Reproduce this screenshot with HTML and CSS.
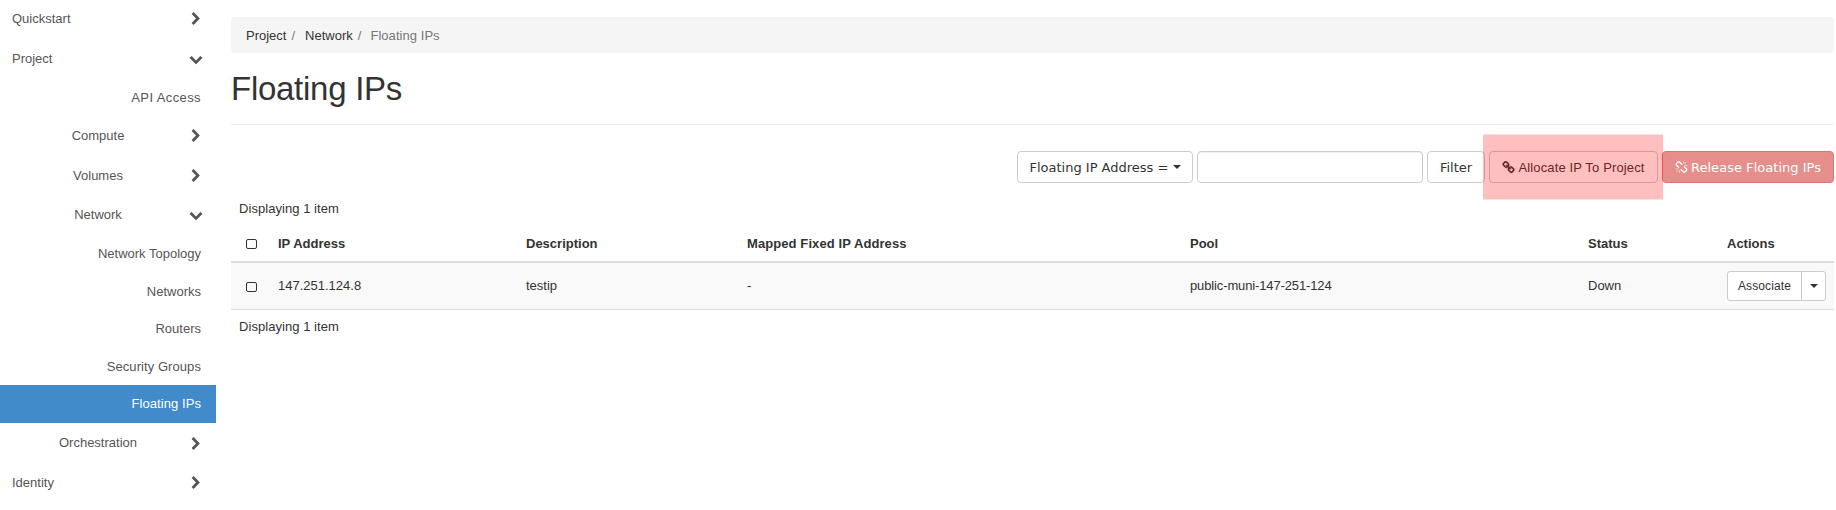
FILE: index.html
```html
<!DOCTYPE html>
<html lang="en">
<head>
<meta charset="utf-8">
<title>Floating IPs</title>
<link rel="stylesheet" href="styles.css">
</head>
<body>
<svg class="defs" aria-hidden="true">
  <symbol id="right" viewBox="0 0 1792 1792"><path d="M1363 877l-742 742q-19 19-45 19t-45-19l-166-166q-19-19-19-45t19-45l531-531-531-531q-19-19-19-45t19-45l166-166q19-19 45-19t45 19l742 742q19 19 19 45t-19 45z"/></symbol>
  <symbol id="down" viewBox="0 0 1792 1792"><path d="M1683 808l-742 741q-19 19-45 19t-45-19l-742-741q-19-19-19-45.500t19-45.500l166-165q19-19 45-19t45 19l531 531 531-531q19-19 45-19t45 19l166 165q19 19 19 45.500t-19 45.500z"/></symbol>
  <symbol id="link" viewBox="0 0 1792 1792"><path d="M1520 1216q0-40-28-68l-208-208q-28-28-68-28-42 0-72 32 3 3 19 18.500t21.500 21.500 15 19 13 25.500 3.500 27.500q0 40-28 68t-68 28q-15 0-27.500-3.500t-25.500-13-19-15-21.500-21.500-18.500-19q-33 31-33 73 0 40 28 68l206 207q27 27 68 27 40 0 68-26l147-146q28-28 28-67zm-703-705q0-40-28-68l-206-207q-28-28-68-28-39 0-68 27l-147 146q-28 28-28 67 0 40 28 68l208 208q27 27 68 27 42 0 72-31-3-3-19-18.500t-21.500-21.500-15-19-13-25.500-3.500-27.500q0-40 28-68t68-28q15 0 27.500 3.500t25.500 13 19 15 21.500 21.500 18.500 19q33-31 33-73zm895 705q0 120-85 203l-147 146q-83 83-203 83-121 0-204-85l-206-207q-83-83-83-203 0-123 88-209l-88-88q-86 88-208 88-120 0-204-84l-208-208q-84-84-84-204t85-203l147-146q83-83 203-83 121 0 204 85l206 207q83 83 83 203 0 123-88 209l88 88q86-88 208-88 120 0 204 84l208 208q84 84 84 204z"/></symbol>
  <symbol id="unlink" viewBox="0 0 1792 1792"><path d="M503 1271l-256 256q-10 9-23 9-12 0-23-9-9-10-9-23t9-23l256-256q10-9 23-9t23 9q9 10 9 23t-9 23zm169 41v320q0 14-9 23t-23 9-23-9-9-23v-320q0-14 9-23t23-9 23 9 9 23zm-224-224q0 14-9 23t-23 9h-320q-14 0-23-9t-9-23 9-23 23-9h320q14 0 23 9t9 23zm1264 128q0 120-85 203l-147 146q-83 83-203 83-121 0-204-85l-334-335q-21-21-42-56l239-18 273 274q28 28 68 27.500t68-27.500l147-146q28-28 28-67 0-40-28-68l-274-275 18-239q35 21 56 42l336 336q84 86 84 204zm-617-724l-239 18-273-274q-28-28-68-28-39 0-68 27l-147 146q-28 28-28 67 0 40 28 68l274 274-18 240q-35-21-56-42l-336-336q-84-86-84-204 0-120 85-203l147-146q83-83 203-83 121 0 204 85l334 335q21 21 42 56zm633 84q0 14-9 23t-23 9h-320q-14 0-23-9t-9-23 9-23 23-9h320q14 0 23 9t9 23zm-544-544v320q0 14-9 23t-23 9-23-9-9-23v-320q0-14 9-23t23-9 23 9 9 23zm407 151l-256 256q-11 9-23 9t-23-9q-9-10-9-23t9-23l256-256q10-9 23-9t23 9q9 10 9 23t-9 23z"/></symbol>
</svg>
<div class="layout">
  <nav class="sidebar">
    <a class="group"><span>Quickstart</span><svg class="chev"><use href="#right"/></svg></a>
    <a class="group"><span>Project</span><svg class="chev"><use href="#down"/></svg></a>
    <a class="leaf wide">API Access</a>
    <a class="group sub"><span>Compute</span><svg class="chev"><use href="#right"/></svg></a>
    <a class="group sub"><span>Volumes</span><svg class="chev"><use href="#right"/></svg></a>
    <a class="group sub"><span>Network</span><svg class="chev"><use href="#down"/></svg></a>
    <a class="leaf">Network Topology</a>
    <a class="leaf">Networks</a>
    <a class="leaf">Routers</a>
    <a class="leaf loose">Security Groups</a>
    <a class="leaf loose active">Floating IPs</a>
    <a class="group sub last"><span>Orchestration</span><svg class="chev"><use href="#right"/></svg></a>
    <a class="group last"><span>Identity</span><svg class="chev"><use href="#right"/></svg></a>
  </nav>
  <main class="content">
    <div class="breadcrumb"><a>Project</a><i>/</i><a>Network</a><i>/</i><span>Floating IPs</span></div>
    <h1 class="title">Floating IPs</h1>
    <div class="toolbar">
      <button class="btn field">Floating IP Address = <b class="caret"></b></button>
      <input class="search" type="text">
      <button class="btn filter">Filter</button>
      <div class="spot"><button class="btn allocate"><svg class="ico"><use href="#link"/></svg>Allocate IP To Project</button></div>
      <button class="btn release"><svg class="ico"><use href="#unlink"/></svg>Release Floating IPs</button>
    </div>
    <div class="count">Displaying 1 item</div>
    <table class="table">
      <colgroup><col class="c0"><col class="c1"><col class="c2"><col class="c3"><col class="c4"><col class="c5"><col class="c6"></colgroup>
      <thead><tr><th><span class="check"></span></th><th>IP Address</th><th>Description</th><th class="mapped">Mapped Fixed IP Address</th><th>Pool</th><th>Status</th><th>Actions</th></tr></thead>
      <tbody><tr><td><span class="check low"></span></td><td>147.251.124.8</td><td>testip</td><td>-</td><td class="pool">public-muni-147-251-124</td><td>Down</td><td><div class="split"><button class="main">Associate</button><button class="more"><b class="caret"></b></button></div></td></tr></tbody>
    </table>
    <div class="count foot">Displaying 1 item</div>
  </main>
</div>
</body>
</html>
```
FILE: styles.css
```css
* { box-sizing: border-box; }
body { margin: 0; background: #fff; color: #333; font: 13px/18.57px "Liberation Sans", Arial, sans-serif; overflow: hidden; }
button { margin: 0; font: inherit; color: inherit; }
.defs { display: none; }
.layout { display: flex; height: 510px; }
.sidebar { width: 216px; flex: none; color: #555; }
.group { display: flex; justify-content: space-between; align-items: center; height: 39.5px; padding: 0 13px 0 12px; }
.group:first-child { padding-bottom: 0.6px; }
.sub span { flex: 1; text-align: center; }
.sub { padding-left: 7px; padding-top: 0.3px; }
.last { padding-top: 2px; }
.chev { width: 14px; height: 14px; fill: #555; flex: none; }
.leaf { display: block; height: 37.55px; padding: 10px 15px 0; text-align: right; }
.loose { letter-spacing: 0.07px; }
.wide { letter-spacing: 0.4px; }
.active { background: #428bca; color: #fff; }
.content { width: 1603px; margin-left: 15px; padding-top: 17px; }
.breadcrumb { display: flex; height: 36px; padding: 10px 15px 0; background: #f5f5f5; border-radius: 4px; }
.breadcrumb i { font-style: normal; color: #777; padding: 0 10px 0 5px; }
.breadcrumb span { color: #777; margin-left: -1px; letter-spacing: 0.05px; }
.title { margin: 0; height: 72px; padding-top: 17px; border-bottom: 1px solid #eee; font-size: 33px; line-height: 38px; font-weight: 500; letter-spacing: -0.27px; }
.toolbar { display: flex; justify-content: flex-end; gap: 4px; margin-top: 26px; height: 32px; }
.btn { display: flex; align-items: center; justify-content: center; height: 32px; padding: 2.2px 0 0; background: #fff; border: 1px solid #ccc; border-radius: 4px; font-family: "DejaVu Sans", sans-serif; white-space: pre; }
.caret { display: inline-block; border: 4px solid transparent; border-top-color: #333; border-bottom: 0; vertical-align: middle; }
.btn .caret { margin-top: -2px; }
.field { width: 176px; }
.search { width: 226px; height: 32px; border: 1px solid #ccc; border-radius: 4px; box-shadow: inset 0 1px 1px rgba(0,0,0,.075); padding: 0 12px; }
.filter { width: 58px; }
.ico { width: 13px; height: 13px; fill: currentColor; margin: -2px 3px 0 0; }
.spot { position: relative; }
.spot::after { content: ""; position: absolute; left: -6px; right: -5px; top: -16px; bottom: -16px; background: rgba(255,0,0,.25); box-shadow: 0 -1px rgba(255,0,0,.12), 0 1px rgba(255,0,0,.12); }
.allocate { width: 169px; font-family: "Liberation Sans", Arial, sans-serif; letter-spacing: 0.14px; }
.allocate .ico { stroke: currentColor; stroke-width: 50px; }
.release { width: 172px; background: #e68e8b; border-color: #e2726f; color: #fff; letter-spacing: 0.03px; }
.count { padding: 17px 8px 0; height: 42px; letter-spacing: 0.05px; }
.table { width: 100%; border-collapse: separate; border-spacing: 0; table-layout: fixed; }
th { height: 38px; padding: 2.5px 8px 0; text-align: left; border-bottom: 2px solid #ddd; }
td { height: 47px; padding: 0 8px; background: #f9f9f9; border-bottom: 1px solid #ddd; }
.mapped { letter-spacing: 0.09px; }
.pool { letter-spacing: -0.13px; }
.c0 { width: 39px; } .c1 { width: 248px; } .c2 { width: 221px; } .c3 { width: 443px; } .c4 { width: 398px; } .c5 { width: 139px; } .c6 { width: 115px; }
.check { display: block; width: 11px; height: 10px; margin: -1px 0 0 6.5px; border: 1px solid #333; border-radius: 2px; }
.low { margin-top: 2px; }
.split { display: flex; width: 99px; height: 30px; border: 1px solid #ccc; border-radius: 3px; background: #fff; }
.main, .more { border: 0; background: none; padding: 0; font-size: 12px; }
.main { width: 74px; border-right: 1px solid #ccc; letter-spacing: 0.13px; }
.more { flex: 1; display: flex; align-items: center; justify-content: center; }
.foot { padding-top: 8px; }
```
